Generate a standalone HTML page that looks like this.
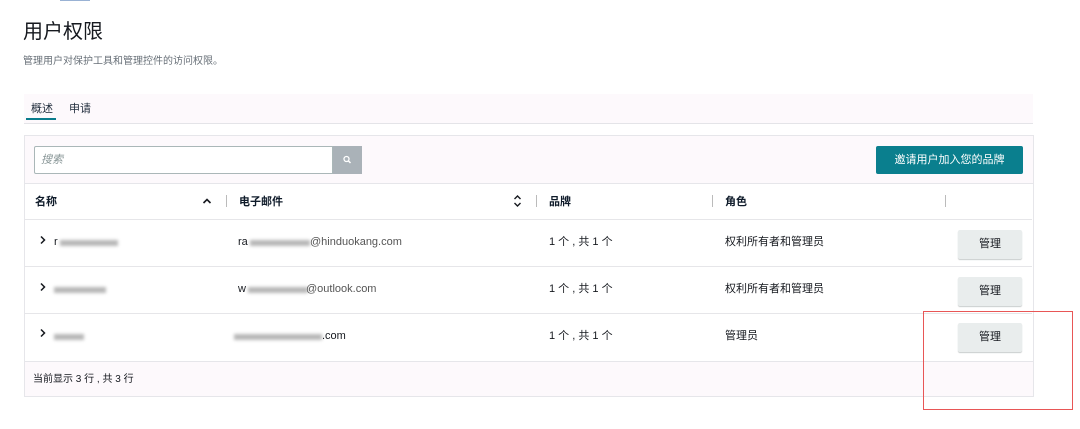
<!DOCTYPE html>
<html><head><meta charset="utf-8"><style>
*{margin:0;padding:0;box-sizing:border-box}
body{width:1080px;height:429px;background:#fff;font-family:"Liberation Sans","Noto Sans CJK SC",sans-serif;color:#232f3e;position:relative;overflow:hidden}
.a{position:absolute;white-space:nowrap;line-height:1.15}
.t{font-size:11px;color:#16191f}
.b{font-weight:bold;font-size:11px;color:#0f1b2a}
.btn{position:absolute;left:958px;width:64px;height:29px;background:#e9eded;border-radius:2px;box-shadow:0 1px 1px #c8cccc;font-size:11px;text-align:center;line-height:29px;color:#16191f}
.hl{position:absolute;left:25px;width:1007px;height:1px;background:#e6e6e9}
.blur{position:absolute;height:6px;background:#9a9a9a;filter:blur(1.5px);opacity:.7}
.sep{position:absolute;width:1px;height:12px;top:195px;background:#bbb}
</style></head><body>
<div class="a" style="left:60px;top:-2px;width:30px;height:3px;background:#36a;opacity:.5"></div>
<div class="a" style="left:23px;top:21px;font-size:20px;color:#16191f">用户权限</div>
<div class="a" style="left:23px;top:56px;font-size:10px;color:#687078">管理用户对保护工具和管理控件的访问权限。</div>
<div class="a" style="left:24px;top:94px;width:1009px;height:30px;background:#fdf9fc;border-bottom:1px solid #e4e4e8"></div>
<div class="a" style="left:31px;top:103px;font-size:11px">概述</div>
<div class="a" style="left:26px;top:118px;width:30px;height:2px;background:#0a7c8c"></div>
<div class="a" style="left:69px;top:103px;font-size:11px">申请</div>
<div class="a" style="left:24px;top:135px;width:1010px;height:262px;border:1px solid #e6e6ea;background:#fff"></div>
<div class="a" style="left:25px;top:136px;width:1008px;height:48px;background:#fdf9fc;border-bottom:1px solid #e6e6ea"></div>
<div class="a" style="left:34px;top:146px;width:299px;height:28px;border:1px solid #aab7b8;background:#fff;border-radius:2px 0 0 2px"></div>
<div class="a" style="left:41px;top:154px;font-size:11px;color:#879596;font-style:italic">搜索</div>
<div class="a" style="left:333px;top:146px;width:29px;height:28px;background:#aab2b8"><svg width="29" height="28"><circle cx="13.5" cy="13" r="2.5" fill="none" stroke="#fff" stroke-width="1.3"/><line x1="15.5" y1="15" x2="17.5" y2="17" stroke="#fff" stroke-width="1.5"/></svg></div>
<div class="a" style="left:876px;top:146px;width:147px;height:28px;background:#0a7f8e;border-radius:2px;color:#fff;font-size:11px;text-align:center;line-height:28px">邀请用户加入您的品牌</div>
<div class="a b" style="left:35px;top:196px">名称</div>
<svg class="a" style="left:202px;top:197px" width="10" height="8"><path d="M1.5 6 L5 2.5 L8.5 6" fill="none" stroke="#16191f" stroke-width="1.6"/></svg>
<div class="sep" style="left:226px"></div>
<div class="a b" style="left:239px;top:196px">电子邮件</div>
<svg class="a" style="left:513px;top:194px" width="9" height="14"><path d="M1.5 5 L4.5 2 L7.5 5 M1.5 9 L4.5 12 L7.5 9" fill="none" stroke="#16191f" stroke-width="1.4"/></svg>
<div class="sep" style="left:536px"></div>
<div class="a b" style="left:549px;top:196px">品牌</div>
<div class="sep" style="left:712px"></div>
<div class="a b" style="left:725px;top:196px">角色</div>
<div class="sep" style="left:945px"></div>
<div class="hl" style="top:219px"></div>
<div class="hl" style="top:266px"></div>
<div class="hl" style="top:313px"></div>
<div class="a" style="left:25px;top:361px;width:1008px;height:35px;background:#fdf9fc;border-top:1px solid #e6e6ea"></div>

<svg class="a" style="left:39px;top:235px" width="8" height="10"><path d="M2 1.5 L5.5 5 L2 8.5" fill="none" stroke="#16191f" stroke-width="1.5"/></svg>
<div class="a t" style="left:54px;top:236px">r</div><div class="blur" style="left:60px;top:240px;width:58px"></div>
<div class="a t" style="left:238px;top:236px">ra</div><div class="blur" style="left:250px;top:240px;width:60px"></div><div class="a t" style="left:310px;top:236px;color:#555">@hinduokang.com</div>
<div class="a t" style="left:549px;top:236px">1 个 , 共 1 个</div>
<div class="a t" style="left:725px;top:236px">权利所有者和管理员</div>
<div class="btn" style="top:230px">管理</div>

<svg class="a" style="left:39px;top:282px" width="8" height="10"><path d="M2 1.5 L5.5 5 L2 8.5" fill="none" stroke="#16191f" stroke-width="1.5"/></svg>
<div class="blur" style="left:54px;top:287px;width:52px"></div>
<div class="a t" style="left:238px;top:283px">w</div><div class="blur" style="left:248px;top:287px;width:60px"></div><div class="a t" style="left:306px;top:283px;color:#555">@outlook.com</div>
<div class="a t" style="left:549px;top:283px">1 个 , 共 1 个</div>
<div class="a t" style="left:725px;top:283px">权利所有者和管理员</div>
<div class="btn" style="top:277px">管理</div>

<svg class="a" style="left:39px;top:328px" width="8" height="10"><path d="M2 1.5 L5.5 5 L2 8.5" fill="none" stroke="#16191f" stroke-width="1.5"/></svg>
<div class="blur" style="left:54px;top:334px;width:30px"></div>
<div class="blur" style="left:234px;top:334px;width:88px"></div><div class="a t" style="left:322px;top:330px">.com</div>
<div class="a t" style="left:549px;top:330px">1 个 , 共 1 个</div>
<div class="a t" style="left:725px;top:330px">管理员</div>
<div class="btn" style="top:323px">管理</div>

<div class="a" style="left:33px;top:374px;font-size:10px;color:#16191f">当前显示 3 行 , 共 3 行</div>
<div class="a" style="left:923px;top:311px;width:150px;height:99px;border:1.5px solid #e85656"></div>
</body></html>
